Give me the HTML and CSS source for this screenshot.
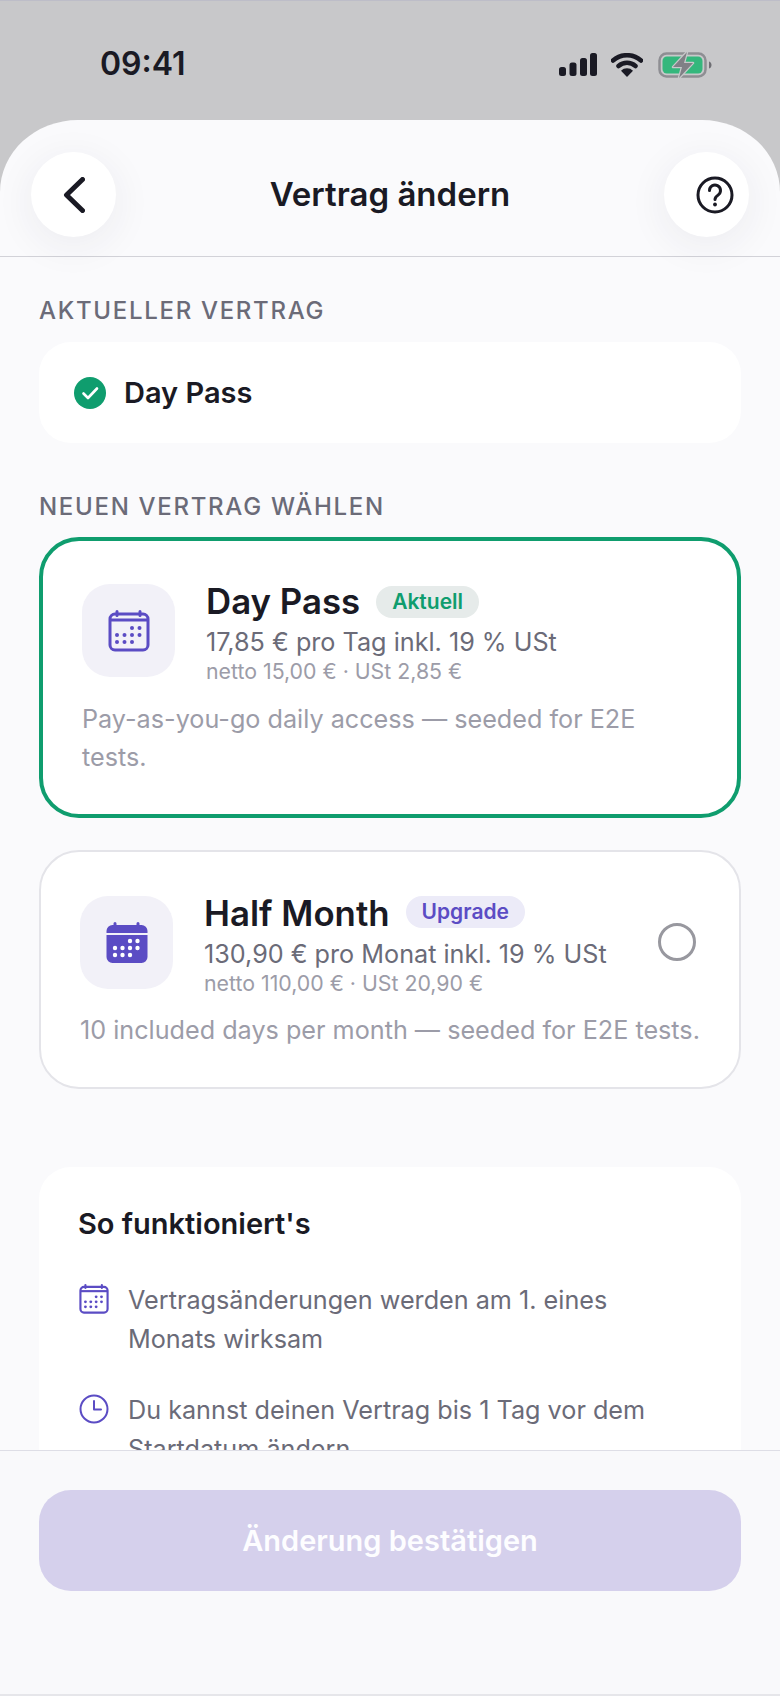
FILE: index.html
```html
<!DOCTYPE html>
<html lang="de">
<head>
<meta charset="utf-8">
<title>Vertrag ändern</title>
<link rel="stylesheet" href="styles.css">
</head>
<body>
<svg class="defs" width="0" height="0" aria-hidden="true">
  <symbol id="cal" viewBox="0 0 42 42">
    <path d="M9 1.5v4M32 1.5v4" fill="none" stroke="currentColor" stroke-width="3" stroke-linecap="round"/>
    <rect x="2" y="4" width="38" height="36" rx="5" fill="none" stroke="currentColor" stroke-width="3"/>
    <path d="M2 10h38" stroke="currentColor" stroke-width="3"/>
    <g fill="currentColor"><circle cx="24" cy="18" r="2"/><circle cx="31.500" cy="18" r="2"/><circle cx="9" cy="25" r="2"/><circle cx="16.500" cy="25" r="2"/><circle cx="24" cy="25" r="2"/><circle cx="31.500" cy="25" r="2"/><circle cx="9" cy="32" r="2"/><circle cx="16.500" cy="32" r="2"/><circle cx="24" cy="32" r="2"/></g>
  </symbol>
  <symbol id="cal-fill" viewBox="0 0 42 42">
    <path d="M9 1.500v4M32 1.500v4" fill="none" stroke="currentColor" stroke-width="3" stroke-linecap="round"/>
    <path d="M.500 10V9a6 6 0 0 1 6-6h29a6 6 0 0 1 6 6v2H.500zM.500 13h41v22a6 6 0 0 1-6 6h-29a6 6 0 0 1-6-6z" fill="currentColor"/>
    <g fill="#fff"><circle cx="24" cy="19" r="2.200"/><circle cx="31.500" cy="19" r="2.200"/><circle cx="9" cy="26" r="2.200"/><circle cx="16.500" cy="26" r="2.200"/><circle cx="24" cy="26" r="2.200"/><circle cx="31.500" cy="26" r="2.200"/><circle cx="9" cy="33" r="2.200"/><circle cx="16.500" cy="33" r="2.200"/><circle cx="24" cy="33" r="2.200"/></g>
  </symbol>
</svg>
<div class="screen">
  <div class="status">
    <span class="time">09:41</span>
    <div class="status-icons">
      <svg class="i-signal" viewBox="0 0 38 23"><rect x="0" y="14" width="7" height="9" rx="2.500"/><rect x="10.500" y="9.500" width="7" height="13.500" rx="2.500"/><rect x="21" y="5" width="7" height="18" rx="2.500"/><rect x="31" y="0" width="7" height="23" rx="2.500"/></svg>
      <svg class="i-wifi" viewBox="0 0 32 24"><path d="M2 7.500a21 21 0 0 1 28 0M7.500 13a13 13 0 0 1 17 0" fill="none" stroke="#1a1a24" stroke-width="4.500" stroke-linecap="round"/><path d="M16 24l-6-6.200a8.500 8.500 0 0 1 12 0z" fill="#1a1a24"/></svg>
      <svg class="i-batt" viewBox="0 0 54 26"><rect x="1.500" y="1.500" width="46" height="23" rx="7" fill="none" stroke="#8e8e93" stroke-width="2.500"/><rect x="4.500" y="4.500" width="40" height="17" rx="4.500" fill="#34b77c"/><path d="M51 9.500c1.800.5 2.500 2 2.500 3.500s-.7 3-2.500 3.500z" fill="#6e6e73"/><path d="M29 0L15 15h9l-3 11 14-15h-9z" fill="#808086" stroke="#c8c8ca" stroke-width="2.500" stroke-linejoin="round" paint-order="stroke"/></svg>
    </div>
  </div>
  <main class="sheet">
    <header class="header">
      <button class="round-btn" aria-label="Zurück">
        <svg class="i-back" viewBox="0 0 22 36"><path d="M19.500 2.500L3.500 18l16 15.500" fill="none" stroke="#1a1a24" stroke-width="5" stroke-linecap="round" stroke-linejoin="round"/></svg>
      </button>
      <h1 class="title">Vertrag ändern</h1>
      <button class="round-btn" aria-label="Hilfe">
        <svg class="i-help" viewBox="0 0 38 38"><circle cx="19" cy="19" r="17" fill="none" stroke="#1a1a24" stroke-width="3"/><path d="M13.500 14.500a5.500 5.500 0 1 1 8.800 4.400c-1.800 1.300-3.300 2.400-3.300 4.600" fill="none" stroke="#1a1a24" stroke-width="3" stroke-linecap="round"/><circle cx="19" cy="28.500" r="1.900" fill="#1a1a24"/></svg>
      </button>
    </header>
    <div class="scroll">
      <div class="label">AKTUELLER VERTRAG</div>
      <div class="current">
        <svg class="i-check" viewBox="0 0 32 32"><circle cx="16" cy="16" r="16" fill="#0f9d6e"/><path d="M9.500 16.500l4.500 4.500 9-9.500" fill="none" stroke="#fff" stroke-width="2.600" stroke-linecap="round" stroke-linejoin="round"/></svg>
        <span class="current-name">Day Pass</span>
      </div>
      <div class="label label-second">NEUEN VERTRAG WÄHLEN</div>

      <section class="plan plan-active">
        <div class="plan-top">
          <div class="plan-icon"><svg class="i-cal"><use href="#cal"/></svg></div>
          <div class="plan-text">
            <div class="plan-head"><span class="plan-name">Day Pass</span><span class="badge badge-green">Aktuell</span></div>
            <div class="price">17,85 € pro Tag inkl. 19 % USt</div>
            <div class="net">netto 15,00 € · USt 2,85 €</div>
          </div>
        </div>
        <p class="desc">Pay-as-you-go daily access — seeded for E2E tests.</p>
      </section>

      <section class="plan plan-other">
        <div class="plan-top">
          <div class="plan-icon"><svg class="i-cal"><use href="#cal-fill"/></svg></div>
          <div class="plan-text">
            <div class="plan-head"><span class="plan-name">Half Month</span><span class="badge badge-purple">Upgrade</span></div>
            <div class="price">130,90 € pro Monat inkl. 19 % USt</div>
            <div class="net">netto 110,00 € · USt 20,90 €</div>
          </div>
          <span class="radio"></span>
        </div>
        <p class="desc">10 included days per month — seeded for E2E tests.</p>
      </section>

      <section class="info">
        <h2 class="info-title">So funktioniert's</h2>
        <div class="info-item">
          <svg class="i-small"><use href="#cal"/></svg>
          <p>Vertragsänderungen werden am 1. eines Monats wirksam</p>
        </div>
        <div class="info-item">
          <svg class="i-small" viewBox="0 0 30 30"><circle cx="15" cy="15" r="13.500" fill="none" stroke="currentColor" stroke-width="2"/><path d="M15 7v8.500h7" fill="none" stroke="currentColor" stroke-width="2" stroke-linecap="round" stroke-linejoin="round"/></svg>
          <p>Du kannst deinen Vertrag bis 1 Tag vor dem Startdatum ändern</p>
        </div>
      </section>
    </div>
    <footer class="footer">
      <button class="confirm">Änderung bestätigen</button>
    </footer>
  </main>
</div>
</body>
</html>
```

FILE: styles.css
```css
* { box-sizing: border-box; }
html, body { margin: 0; padding: 0; }
body { font-family: Inter, "Liberation Sans", sans-serif; color: #1a1a24; background: #c8c8ca; }
.defs { display: block; height: 0; }
p, h1, h2 { margin: 0; }
button { font-family: inherit; border: 0; padding: 0; }

.screen { width: 780px; height: 1696px; display: flex; flex-direction: column; overflow: hidden; background: #c8c8ca; border-top: 1px solid #bdbdc8; }

.status { height: 119px; flex: none; display: flex; align-items: center; justify-content: space-between; padding: 8px 68px 0 100px; }
.time { font-size: 32px; font-weight: 600; line-height: 38px; color: #1a1a24; margin-top: -2px; }
.status-icons { display: flex; align-items: center; }
.i-signal { width: 38px; height: 23px; fill: #1a1a24; margin-right: 14px; }
.i-wifi { width: 32px; height: 24px; margin-right: 15px; }
.i-batt { width: 54px; height: 26px; }

.sheet { flex: 1; min-height: 0; display: flex; flex-direction: column; background: #fafafc; border-radius: 78px 78px 0 0 / 72px 72px 0 0; overflow: hidden; }

.header { flex: none; height: 137px; padding: 32px 31px 0; display: flex; justify-content: space-between; align-items: flex-start; border-bottom: 1px solid #d2d2d8; }
.round-btn { width: 85px; height: 85px; border-radius: 50%; background: #fff; display: flex; align-items: center; justify-content: center; box-shadow: 0 8px 40px rgba(40, 40, 70, .07); }
.i-back { width: 22px; height: 36px; }
.i-help { width: 38px; height: 38px; margin-left: 16px; }
.title { font-size: 33px; font-weight: 600; line-height: 85px; color: #1a1a24; }

.scroll { flex: 1; min-height: 0; overflow: hidden; padding: 39px 39px 0; }
.label { font-size: 24px; line-height: 30px; letter-spacing: 1.700px; color: #6b6b78; font-weight: 500; }
.label-second { margin-top: 49px; }

.current { height: 101px; margin-top: 16px; background: #fff; border-radius: 32px; display: flex; align-items: center; padding-left: 35px; }
.i-check { width: 32px; height: 32px; margin-right: 18px; }
.current-name { font-size: 29px; font-weight: 600; }

.plan { background: #fff; border-radius: 40px; }
.plan-active { margin-top: 15px; height: 281px; border: 4px solid #0f9d6e; padding: 43px 38px 0 39px; }
.plan-other { margin-top: 32px; height: 239px; border: 2px solid #e4e4e9; padding: 44px 30px 0 39px; }
.plan-top { display: flex; align-items: flex-start; }
.plan-icon { width: 93px; height: 93px; flex: none; border-radius: 28px; background: #f2f1f8; color: #5b4cc4; display: flex; align-items: center; justify-content: center; }
.i-cal { width: 42px; height: 42px; }
.plan-text { margin-left: 31px; flex: 1; min-width: 0; }
.plan-head { display: flex; align-items: center; height: 35px; }
.plan-name { font-size: 34.800px; font-weight: 600; line-height: 35px; }
.badge { font-size: 21px; font-weight: 600; line-height: 32px; height: 32px; padding: 0 16px; border-radius: 16px; margin-left: 16px; }
.badge-green { color: #0f9d6e; background: #e6ebea; }
.badge-purple { color: #5b4cc4; background: #ecebf8; margin-bottom: 4px; }
.price { font-size: 25.200px; line-height: 32px; color: #6b6b78; margin-top: 7px; }
.net { font-size: 21.300px; line-height: 26px; color: #9c9ca8; }
.radio { width: 38px; height: 38px; flex: none; border-radius: 50%; border: 3px solid #98989f; margin: 27px 13px 0 0; }
.desc { font-size: 25.200px; line-height: 38px; color: #9c9ca8; margin-top: 16px; }
.plan-other .desc { margin-top: 15px; }

.info { margin-top: 78px; background: #fff; border-radius: 32px; padding: 40px 39px; }
.info-title { font-size: 29px; font-weight: 600; line-height: 34px; margin-bottom: 40px; }
.info-item { display: flex; align-items: flex-start; color: #5b4cc4; margin-bottom: 33px; }
.i-small { width: 30px; height: 30px; flex: none; margin: 3px 19px 0 1px; }
.info-item p { font-size: 25.200px; line-height: 38.500px; color: #6b6b78; }

.footer { flex: none; height: 246px; padding: 39px 39px 0; background: #f9f9fb; border-top: 1px solid #dedee6; border-bottom: 2px solid #e6e6ea; }
.confirm { width: 100%; height: 101px; border-radius: 32px; background: #d5d0ec; color: #fdfdff; font-size: 29px; font-weight: 600; }
```
